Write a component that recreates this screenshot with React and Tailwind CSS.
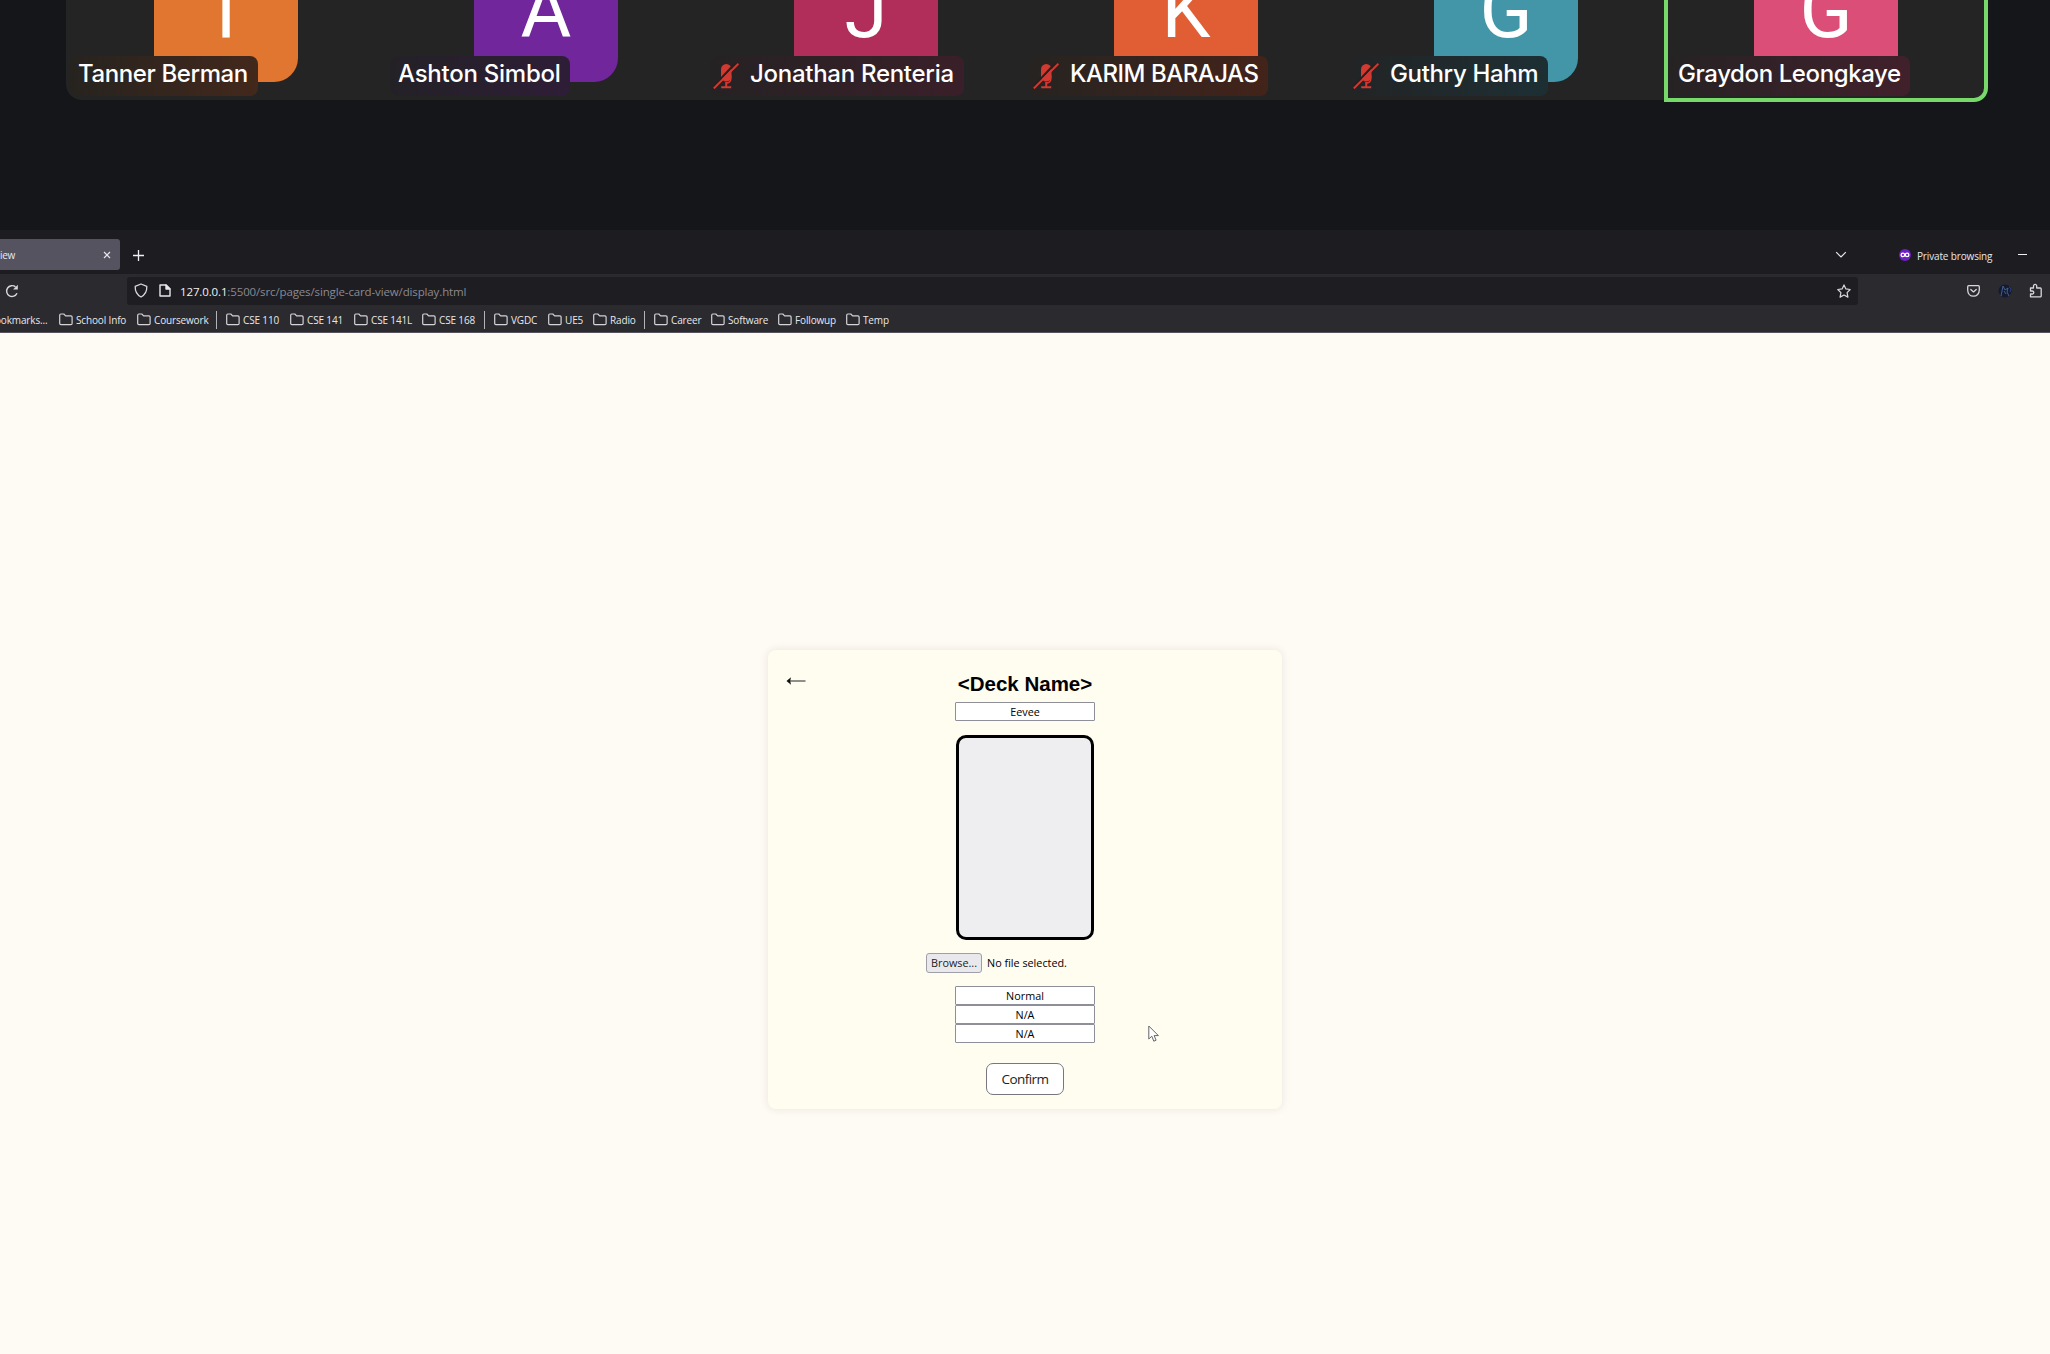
import React from "react";

const participants = [
  { letter: "T", name: "Tanner Berman", avatar: "bg-[#e0762f]", label: "w-[188px] from-[#26231f] to-[#43281b]", track: "tracking-[-0.4px]", round: true },
  { letter: "A", name: "Ashton Simbol", avatar: "bg-[#71279b]", label: "w-[180px] from-[#232126] to-[#2e1d37]", track: "tracking-[-0.25px]", round: true },
  { letter: "J", name: "Jonathan Renteria", avatar: "bg-[#b12d5a]", label: "w-[254px] from-[#252224] to-[#3a1f29]", track: "tracking-[-0.28px]", muted: true },
  { letter: "K", name: "KARIM BARAJAS", avatar: "bg-[#e15d33]", label: "w-[238px] from-[#262321] to-[#43231a]", track: "tracking-[-0.5px]", muted: true },
  { letter: "G", name: "Guthry Hahm", avatar: "bg-[#4296a8]", label: "w-[198px] from-[#222425] to-[#1d2f34]", track: "tracking-[-0.35px]", muted: true, round: true },
  { letter: "G", name: "Graydon Leongkaye", avatar: "bg-[#da4e78]", label: "w-[240px] from-[#262224] to-[#41202b]", track: "tracking-[-0.4px]", active: true },
];

function MicOff() {
  return (
    <svg className="ml-[3px] mr-[11px] h-[26px] w-[26px] shrink-0" viewBox="0 0 26 26" fill="none">
      <rect x="8" y="1" width="10.5" height="17.5" rx="5.2" fill="#d03a32" />
      <path d="M13.2 19v5M8.2 24.2h10" stroke="#d03a32" strokeWidth="2" />
      <path d="M17.8 12.5v3.2c0 2.6-2 4.4-4.6 4.4" stroke="#d03a32" strokeWidth="1.6" />
      <path d="M0 24 24 -1.5" stroke="#26211f" strokeWidth="2.2" />
      <path d="M.8 25.4 25.4 .8" stroke="#d03a32" strokeWidth="2" />
    </svg>
  );
}

function Tile({ p, first }) {
  return (
    <div className={"relative h-[100px] w-[320px] bg-[#242424] " + (first ? "rounded-bl-[16px]" : "") + (p.active ? "rounded-br-[16px]" : "")}>
      <div className={"ml-[88px] flex h-[82px] w-[144px] items-end justify-center " + p.avatar + (p.round ? " rounded-br-[24px]" : "")}>
        <span className="mb-[25px] font-[Roboto] text-[78px] leading-[93px] text-white">{p.letter}</span>
      </div>
      {p.active && <div className="absolute -left-[2px] -right-[2px] -bottom-[2px] top-0 rounded-br-[14px] border-4 border-t-0 border-[#78d96b]" />}
      <div className={"absolute left-[4px] top-[56px] flex h-[40px] items-center rounded-[8px] bg-linear-to-r " + p.label}>
        {p.muted ? <MicOff /> : <span className="w-[8px] shrink-0" />}
        <span className={"mb-[4px] whitespace-nowrap font-[Inter] text-[24px] font-medium leading-[36px] text-white " + p.track}>{p.name}</span>
      </div>
    </div>
  );
}

function Folder() {
  return (
    <svg className="h-[13px] w-[14px] shrink-0" viewBox="0 0 14 13" fill="none" stroke="#d4d4d8" strokeWidth="1.2" strokeLinejoin="round">
      <path d="M.7 10.6V2.2Q.7 1 1.9 1H4.8L6.6 2.9H11.9Q13.1 2.9 13.1 4.1V10.4Q13.1 11.6 11.9 11.6H1.9Q.7 11.6 .7 10.6Z" />
    </svg>
  );
}

const bookmarks = [
  ["School Info", "w-[78px]"],
  ["Coursework", "w-[79px]"],
  "|",
  ["CSE 110", "w-[64px]"],
  ["CSE 141", "w-[64px]"],
  ["CSE 141L", "w-[68px]"],
  ["CSE 168", "w-[62px]"],
  "|",
  ["VGDC", "w-[54px]"],
  ["UE5", "w-[45px]"],
  ["Radio", "w-[51px]"],
  "|",
  ["Career", "w-[57px]"],
  ["Software", "w-[67px]"],
  ["Followup", "w-[68px]"],
  ["Temp", "w-[50px]"],
];

function Browser() {
  return (
    <div className="overflow-hidden font-['Open_Sans'] text-[#e8e8ec]">
      <div className="flex h-[44px] bg-[#1d1c21] pt-[9px]">
        <div className="flex h-[31px] w-[120px] items-center justify-between rounded-r-[3px] bg-[#565360] pr-[9px]">
          <span className="mt-[2px] text-[10px] tracking-[-0.3px]">iew</span>
          <svg className="h-[8px] w-[8px]" viewBox="0 0 8 8" stroke="#e4e4e8" strokeWidth="1.2"><path d="M1 1l6 6M7 1L1 7" /></svg>
        </div>
        <svg className="ml-[13px] mt-[11px] h-[11px] w-[11px]" viewBox="0 0 11 11" stroke="#f0f0f2" strokeWidth="1.3"><path d="M5.5 0v11M0 5.5h11" /></svg>
        <svg className="ml-[1691px] mt-[12px] h-[8px] w-[12px]" viewBox="0 0 12 8" fill="none" stroke="#e8e8ec" strokeWidth="1.2"><path d="M1.2 1.2L6 6l4.800-4.800" /></svg>
        <svg className="ml-[52px] mt-[10px] h-[12px] w-[12px]" viewBox="0 0 12 12" fill="none">
          <circle cx="6" cy="6" r="6" fill="#6f1fc4" />
          <circle cx="3.900" cy="5.900" r="1.800" stroke="#fff" strokeWidth="1.300" />
          <circle cx="8.100" cy="5.900" r="1.800" stroke="#fff" strokeWidth="1.300" />
        </svg>
        <span className="ml-[6px] mt-[9px] w-[101px] whitespace-nowrap text-[10px] leading-[16px] tracking-[-0.15px]">Private browsing</span>
        <span className="mt-[15px] h-[1px] w-[9px] bg-[#f0f0f2]" />
      </div>
      <div className="flex h-[33px] items-center bg-[#2a2a2f]">
        <svg className="ml-[5px] h-[14px] w-[14px]" viewBox="0 0 14 14" fill="none" stroke="#d8d8dc" strokeWidth="1.4">
          <path d="M12 9.200A5.400 5.400 0 1 1 10.500 2.900" /><path d="M12.800 .8v4.700H8.100z" fill="#d8d8dc" stroke="none" />
        </svg>
        <div className="ml-[108px] flex h-[28px] w-[1731px] items-center rounded-[3px] bg-[#1e1d22]">
          <svg className="ml-[7px] h-[15px] w-[14px]" viewBox="0 0 14 15" fill="none" stroke="#d8d8dc" strokeWidth="1.3" strokeLinejoin="round">
            <path d="M7 1 1.200 3.300C1 8 2.800 11.800 7 14c4.200-2.200 6-6 5.800-10.700z" />
          </svg>
          <svg className="ml-[11px] h-[13px] w-[12px]" viewBox="0 0 12 13" fill="none" stroke="#e8e8ec" strokeWidth="1.4" strokeLinejoin="round">
            <path d="M1 1h6l4 4v7H1z" /><path d="M7 1v4h4z" fill="#e8e8ec" />
          </svg>
          <span className="ml-[9px] mt-[2px] whitespace-nowrap text-[11.500px] leading-[16px] tracking-[-0.13px] text-[#8b8a90]">
            <span className="text-[#f2f2f4]">127.0.0.1</span>:5500/src/pages/single-card-view/display.html
          </span>
          <svg className="ml-auto mr-[7px] h-[14px] w-[14px]" viewBox="0 0 14 14" fill="none" stroke="#d8d8dc" strokeWidth="1.2" strokeLinejoin="round">
            <path d="M7 .9l1.900 4 4.300.6-3.100 3.100.8 4.500L7 11l-3.900 2.100.8-4.500L.8 5.500l4.300-.6z" />
          </svg>
        </div>
        <svg className="ml-[109px] h-[12px] w-[13px]" viewBox="0 0 13 12" fill="none" stroke="#d8d8dc" strokeWidth="1.300" strokeLinecap="round" strokeLinejoin="round">
          <path d="M1.700.7h9.600q1 0 1 1V5c0 3.700-2.500 6.200-5.800 6.200S.7 8.700.7 5V1.700q0-1 1-1z" /><path d="M3.800 4.400l2.700 2.500 2.700-2.500" />
        </svg>
        <svg className="ml-[18px] h-[14px] w-[14px]" viewBox="0 0 14 14" fill="none">
          <circle cx="7" cy="7" r="6.500" fill="#131a32" />
          <path d="M3 12l1-5 1-5 2 4 3-2-1 4 2 4M6 7l2 3" stroke="#4f719d" strokeWidth=".8" />
          <path d="M11 3l2 2-1 3" stroke="#253e73" strokeWidth="1" />
        </svg>
        <svg className="ml-[17px] h-[15px] w-[13px] shrink-0" viewBox="0 0 13 15" fill="none" stroke="#d8d8dc" strokeWidth="1.300" strokeLinejoin="round">
          <path d="M1.500 5h3V3a1.600 1.600 0 0 1 3.200 0v2h3.600q.9 0 .9.900v7q0 .9-.9.900H1.500V11h1.800a1.500 1.500 0 0 0 0-3H1.500z" />
        </svg>
      </div>
      <div className="flex h-[26px] items-center border-b border-[#57545d] bg-[#2a2a2f] text-[10px] tracking-[-0.15px]">
        <span className="-ml-[5px] mt-[2px] w-[64px] whitespace-nowrap">ookmarks...</span>
        {bookmarks.map((b, i) =>
          b === "|" ? (
            <span key={i} className="mr-[9px] h-[18px] w-[1px] shrink-0 bg-[#b4b3b8]" />
          ) : (
            <span key={i} className={"flex shrink-0 items-center gap-[3px] whitespace-nowrap " + b[1]}>
              <Folder />
              <span className="mt-[2px]">{b[0]}</span>
            </span>
          )
        )}
      </div>
    </div>
  );
}

function Field({ children }) {
  return (
    <div className="flex h-[19px] w-[140px] items-center justify-center rounded-[1px] border border-[#8f8f9a] bg-white font-['Open_Sans'] text-[10.800px] leading-[14px] text-black">
      {children}
    </div>
  );
}

function Card() {
  return (
    <div className="relative mx-auto mt-[317px] flex h-[459px] w-[514px] flex-col items-center rounded-[8px] bg-[#fffcf0] shadow-[0_0_9px_rgba(60,50,40,0.10)]">
      <svg className="absolute left-[18px] top-[26px] h-[10px] w-[20px]" viewBox="0 0 20 10" fill="none">
        <path d="M3 5h16.500" stroke="#222" strokeWidth="1" /><path d="M.5 5 5 1.200 4.200 5 5 8.800z" fill="#111" />
      </svg>
      <h1 className="mt-[22px] font-['Liberation_Sans'] text-[20.500px] font-bold leading-[24px] text-black">&lt;Deck Name&gt;</h1>
      <div className="mt-[6px]"><Field>Eevee</Field></div>
      <div className="mt-[14px] h-[205px] w-[138px] rounded-[10px] border-[3px] border-black bg-[#eeeef0]" />
      <div className="mt-[13px] flex h-[20px] w-[198px] items-center gap-[5px] font-['Open_Sans'] text-[10.800px] text-black">
        <span className="flex h-[20px] w-[56px] items-center justify-center rounded-[3px] border border-[#a09fa8] bg-[#e9e9ed] text-[#222]">Browse...</span>
        <span className="mt-[1px] whitespace-nowrap">No file selected.</span>
      </div>
      <div className="mt-[13px]">
        <Field>Normal</Field>
        <Field>N/A</Field>
        <Field>N/A</Field>
      </div>
      <div className="mt-[20px] flex h-[32px] w-[78px] items-center justify-center rounded-[7px] border border-[#77777d] bg-white font-['Open_Sans'] text-[13.500px] tracking-[-0.55px] text-[#222]">Confirm</div>
      <svg className="absolute left-[380px] top-[375px] h-[18px] w-[12px]" viewBox="0 0 12 18" fill="#fff" stroke="#66666a" strokeWidth="1">
        <path d="M.8 1v13l3-2.800 2 5 2.300-1-2-4.600h4.300z" />
      </svg>
    </div>
  );
}

export default function App() {
  return (
    <div className="h-[1354px] w-[2050px] overflow-hidden bg-[#fefaf4]">
      <div className="h-[230px] bg-[#15161a] pl-[66px]">
        <div className="flex">
          {participants.map((p, i) => <Tile key={i} p={p} first={i === 0} />)}
        </div>
      </div>
      <Browser />
      <Card />
    </div>
  );
}
